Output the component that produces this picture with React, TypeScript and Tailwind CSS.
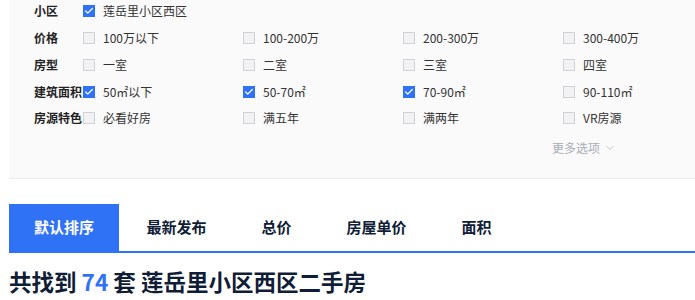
import { Check, ChevronDown } from 'lucide-react'

type Opt = { text: string; checked?: boolean }

const rows: { label: string; options: Opt[] }[] = [
  { label: '小区', options: [{ text: '莲岳里小区西区', checked: true }] },
  {
    label: '价格',
    options: [{ text: '100万以下' }, { text: '100-200万' }, { text: '200-300万' }, { text: '300-400万' }],
  },
  {
    label: '房型',
    options: [{ text: '一室' }, { text: '二室' }, { text: '三室' }, { text: '四室' }],
  },
  {
    label: '建筑面积',
    options: [
      { text: '50㎡以下', checked: true },
      { text: '50-70㎡', checked: true },
      { text: '70-90㎡', checked: true },
      { text: '90-110㎡' },
    ],
  },
  {
    label: '房源特色',
    options: [{ text: '必看好房' }, { text: '满五年' }, { text: '满两年' }, { text: 'VR房源' }],
  },
]

const tabs = ['默认排序', '最新发布', '总价', '房屋单价', '面积']

function Box({ checked }: { checked?: boolean }) {
  if (checked) {
    return (
      <span className="w-[12px] h-[12px] bg-[#3072f6] flex items-center justify-center shrink-0">
        <Check size={10} strokeWidth={3} className="text-white" />
      </span>
    )
  }
  return <span className="w-[12px] h-[12px] bg-[#f2f2f2] border border-[#cfd3d8] shrink-0" />
}

export default function App() {
  return (
    <div
      className="w-[695px] h-[300px] overflow-hidden bg-white text-[#101d37]"
      style={{ fontFamily: '"Noto Sans CJK SC", "Noto Sans", sans-serif' }}
    >
      {/* Filter panel */}
      <div className="ml-[9px] bg-[#fafafa] border-b border-[#ececec] pl-[25px] pb-[18px] -mt-[2px]">
        {rows.map((row) => (
          <div key={row.label} className="flex items-center h-[26.75px] text-[12px] whitespace-nowrap">
            <span className="w-[49px] shrink-0 font-bold text-[#222]">{row.label}</span>
            {row.options.map((o) => (
              <label key={o.text} className="w-[160px] shrink-0 flex items-center gap-[8px] text-[#333]">
                <Box checked={o.checked} />
                <span>{o.text}</span>
              </label>
            ))}
          </div>
        ))}
        <div className="flex items-center h-[24px] pl-[518px] mt-[4px] text-[12px] text-[#a8adb6] gap-[4px]">
          <span>更多选项</span>
          <ChevronDown size={12} strokeWidth={1.5} />
        </div>
      </div>

      {/* Sort tabs */}
      <div className="mt-[25px] ml-[9px] flex border-b-[2px] border-[#3072f6] h-[49px]">
        {tabs.map((t, i) => (
          <div
            key={t}
            className={
              i === 0
                ? 'px-[25px] flex items-center bg-[#3072f6] text-white font-bold text-[15px]'
                : 'px-[27.5px] flex items-center text-[#101d37] font-bold text-[15px]'
            }
          >
            {t}
          </div>
        ))}
      </div>

      {/* Result title */}
      <div className="ml-[9px] mt-[14px] text-[22.5px] font-bold leading-[28px] text-[#101d37] whitespace-nowrap">
        共找到 <span className="text-[#3072f6]">74</span> 套 莲岳里小区西区二手房
      </div>
    </div>
  )
}
